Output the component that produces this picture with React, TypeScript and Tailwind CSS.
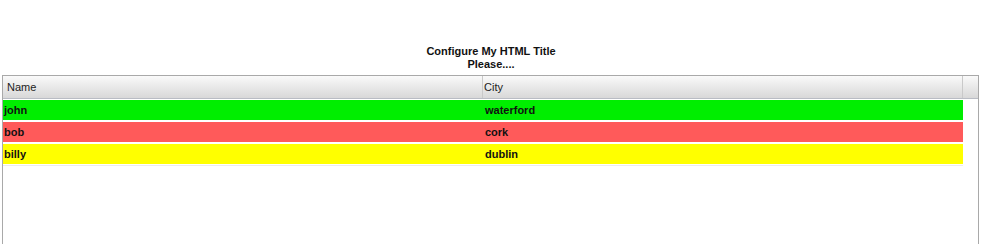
import React from 'react';

const rows = [
  { name: 'john', city: 'waterford', bg: 'bg-[#00ee00]' },
  { name: 'bob', city: 'cork', bg: 'bg-[#ff5a5a]' },
  { name: 'billy', city: 'dublin', bg: 'bg-[#ffff00]' },
];

const App = () => {
  return (
    <div className="w-[982px] h-[244px] overflow-hidden bg-white font-['Liberation_Sans',Arial,sans-serif] text-[11px]">
      <div className="pt-[45px] pb-[4px] text-center font-bold leading-[13px] text-[#111]">
        <div>Configure My HTML Title</div>
        <div>Please....</div>
      </div>

      <div className="ml-[2px] w-[977px] h-[200px] border border-[#a9a9a9]">
        <div className="flex h-[23px] border-b border-[#b9bcc4] bg-gradient-to-b from-[#fafafa] to-[#d8d8d8] text-[#222]">
          <div className="w-[480px] border-r border-[#c9c9c9] pl-[4px] flex items-center">Name</div>
          <div className="w-[480px] border-r border-[#c9c9c9] pl-[1px] flex items-center">City</div>
          <div className="flex-1" />
        </div>

        <div>
          {rows.map((row) => (
            <div key={row.name} className="w-[960px] border-y border-white">
              <div className={`flex h-[20px] items-center font-bold text-[#111] ${row.bg}`}>
                <div className="w-[481px] pl-[1px]">{row.name}</div>
                <div className="flex-1 pl-[1px]">{row.city}</div>
              </div>
            </div>
          ))}
          <div className="w-[960px] h-px bg-[#ececec]" />
        </div>
      </div>
    </div>
  );
};

export default App;
